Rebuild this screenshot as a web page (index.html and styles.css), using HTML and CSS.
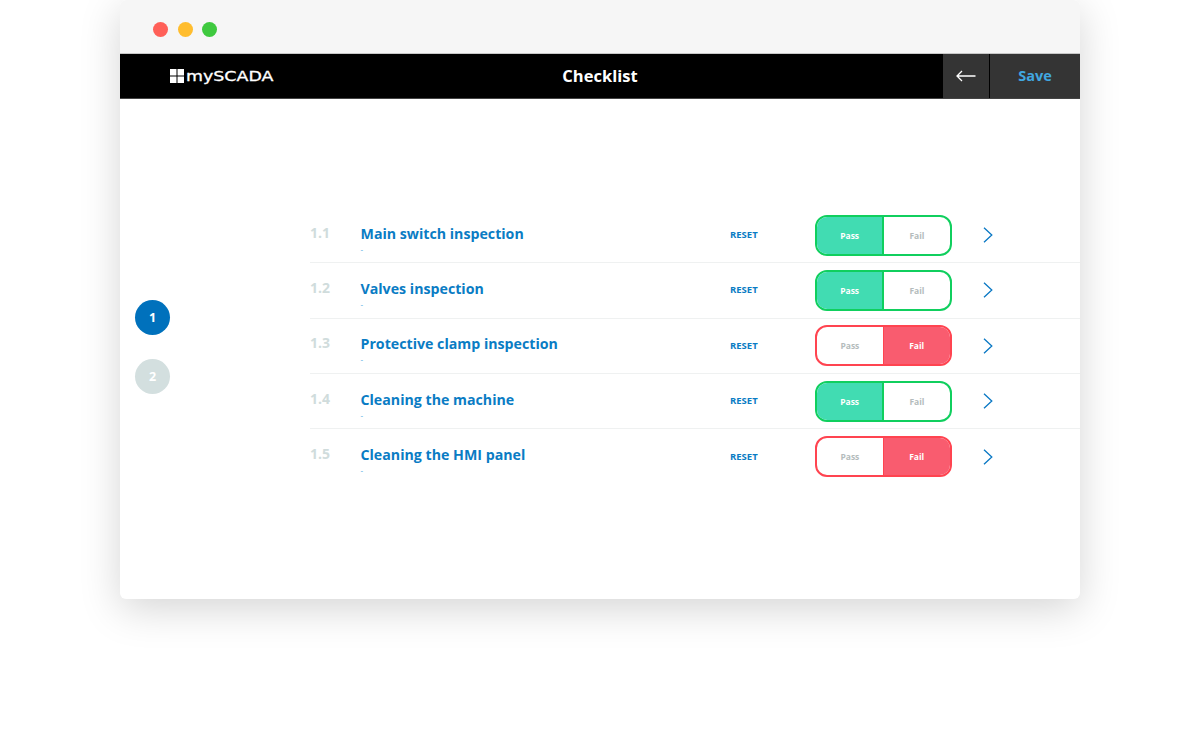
FILE: index.html
```html
<!DOCTYPE html>
<html lang="en">
<head>
<meta charset="utf-8">
<title>Checklist</title>
<link rel="stylesheet" href="styles.css">
</head>
<body>
<div class="window">
  <div class="titlebar">
    <span class="dot red"></span><span class="dot yellow"></span><span class="dot green"></span>
  </div>
  <header class="appbar">
    <div class="brand">
      <svg class="logo" width="14" height="14" viewBox="0 0 14 14"><path fill="#fff" d="M0 0h6.500v6.500H0zM7.500 0H14v6.500H7.500zM0 7.500h6.500V14H0zM7.500 7.500H14V14H7.500z"/></svg>
      <span class="brand-name">mySCADA</span>
    </div>
    <h1 class="title">Checklist</h1>
    <button class="back"><svg width="20" height="12" viewBox="0 0 20 12"><path d="M19.500 6H1M6 1 1 6l5 5" fill="none" stroke="#fff" stroke-width="1.300"/></svg></button>
    <button class="save">Save</button>
  </header>
  <main class="content">
    <nav class="steps">
      <span class="step active">1</span>
      <span class="step">2</span>
    </nav>
    <section class="list">
      <div class="row">
        <span class="num">1.1</span>
        <div class="info"><div class="name">Main switch inspection</div><div class="sub">-</div></div>
        <a class="reset">RESET</a>
        <div class="toggle pass"><span class="opt on">Pass</span><span class="opt">Fail</span></div>
        <svg class="chev" width="10" height="16" viewBox="0 0 10 16"><path d="M1 .7 8.800 8 1 15.300" fill="none" stroke="#0a78c4" stroke-width="1.300"/></svg>
      </div>
      <div class="row">
        <span class="num">1.2</span>
        <div class="info"><div class="name">Valves inspection</div><div class="sub">-</div></div>
        <a class="reset">RESET</a>
        <div class="toggle pass"><span class="opt on">Pass</span><span class="opt">Fail</span></div>
        <svg class="chev" width="10" height="16" viewBox="0 0 10 16"><path d="M1 .7 8.800 8 1 15.300" fill="none" stroke="#0a78c4" stroke-width="1.300"/></svg>
      </div>
      <div class="row">
        <span class="num">1.3</span>
        <div class="info"><div class="name">Protective clamp inspection</div><div class="sub">-</div></div>
        <a class="reset">RESET</a>
        <div class="toggle fail"><span class="opt">Pass</span><span class="opt on">Fail</span></div>
        <svg class="chev" width="10" height="16" viewBox="0 0 10 16"><path d="M1 .7 8.800 8 1 15.300" fill="none" stroke="#0a78c4" stroke-width="1.300"/></svg>
      </div>
      <div class="row">
        <span class="num">1.4</span>
        <div class="info"><div class="name">Cleaning the machine</div><div class="sub">-</div></div>
        <a class="reset">RESET</a>
        <div class="toggle pass"><span class="opt on">Pass</span><span class="opt">Fail</span></div>
        <svg class="chev" width="10" height="16" viewBox="0 0 10 16"><path d="M1 .7 8.800 8 1 15.300" fill="none" stroke="#0a78c4" stroke-width="1.300"/></svg>
      </div>
      <div class="row last">
        <span class="num">1.5</span>
        <div class="info"><div class="name">Cleaning the HMI panel</div><div class="sub">-</div></div>
        <a class="reset">RESET</a>
        <div class="toggle fail"><span class="opt">Pass</span><span class="opt on">Fail</span></div>
        <svg class="chev" width="10" height="16" viewBox="0 0 10 16"><path d="M1 .7 8.800 8 1 15.300" fill="none" stroke="#0a78c4" stroke-width="1.300"/></svg>
      </div>
    </section>
  </main>
</div>
</body>
</html>
```
FILE: styles.css
```css
* { box-sizing: border-box; }
html, body { margin: 0; height: 750px; overflow: hidden; background: #fff; }
body { font-family: "Open Sans", "Liberation Sans", sans-serif; padding: 0 120px; }
.window { width: 960px; height: 599px; background: #fff; box-shadow: 0 10px 40px rgba(0,0,0,.17); display: flex; flex-direction: column; overflow: hidden; border-radius: 6px; }
.titlebar { height: 54px; background: #f6f6f6; border-bottom: 1px solid #c8c8c8; display: flex; align-items: center; gap: 9.500px; padding: 5px 0 0 33px; flex: none; }
.dot { width: 15px; height: 15px; border-radius: 50%; }
.red { background: #ff6058; }
.yellow { background: #ffbd2e; }
.green { background: #3fc93f; }
.appbar { height: 45px; background: #000; border-bottom: 1px solid #444; display: flex; align-items: center; position: relative; flex: none; }
.brand { display: flex; align-items: center; gap: 2px; padding-left: 50px; color: #fff; }
.logo { display: block; }
.brand-name { font-family: "DejaVu Sans", sans-serif; font-size: 13.500px; line-height: 14px; -webkit-text-stroke: .3px #fff; transform: scaleX(1.29); transform-origin: left center; }
.title { position: absolute; left: 0; right: 0; top: 0; bottom: 2px; margin: 0; display: flex; align-items: center; justify-content: center; color: #fff; font-size: 16.500px; font-weight: 700; pointer-events: none; }
.back, .save { height: 44px; border: 0; background: #343434; padding: 0; display: flex; align-items: center; justify-content: center; font-family: inherit; }
.back { width: 46px; margin-left: auto; margin-right: 1px; }
.save { width: 90px; color: #41a7e0; font-size: 14.500px; font-weight: 700; padding-bottom: 2px; }
.content { flex: 1; display: flex; }
.steps { width: 190px; flex: none; display: flex; flex-direction: column; align-items: flex-start; gap: 24px; padding: 201px 0 0 15px; }
.step { width: 35px; height: 35px; border-radius: 50%; background: #d3dfdf; color: #fff; font-size: 12.500px; font-weight: 700; display: flex; align-items: center; justify-content: center; }
.step.active { background: #0071bc; }
.list { flex: 1; padding-top: 109px; }
.row { height: 55.300px; border-bottom: 1px solid #eff1f1; display: flex; align-items: center; }
.row.last { border-bottom: 0; }
.num { width: 50.500px; color: #d0dcdc; font-size: 14px; font-weight: 700; flex: none; padding-bottom: 6px; }
.info { width: 369.500px; flex: none; padding-top: 7px; }
.name { color: #0a7cc4; font-size: 14.200px; font-weight: 700; line-height: 20px; white-space: nowrap; }
.sub { color: #3aa0dd; font-size: 8px; line-height: 10px; }
.reset { width: 85px; flex: none; color: #0a7cc4; font-size: 9.500px; font-weight: 700; padding-bottom: 1px; }
.toggle { width: 136.500px; height: 41px; border-radius: 12px; border: 2px solid; display: flex; overflow: hidden; flex: none; background: #fff; }
.toggle.pass { border-color: #10cf5e; }
.toggle.fail { border-color: #ff4450; }
.opt { flex: 1; display: flex; align-items: center; justify-content: center; color: #b4bcbc; font-size: 8.500px; font-weight: 700; }
.pass .opt.on { background: #41dcb2; color: #fff; border-right: 2px solid #10cf5e; }
.fail .opt.on { background: #f95c6f; color: #fff; border-left: 1px solid #ff4450; }
.chev { margin-left: 31px; flex: none; }
```
